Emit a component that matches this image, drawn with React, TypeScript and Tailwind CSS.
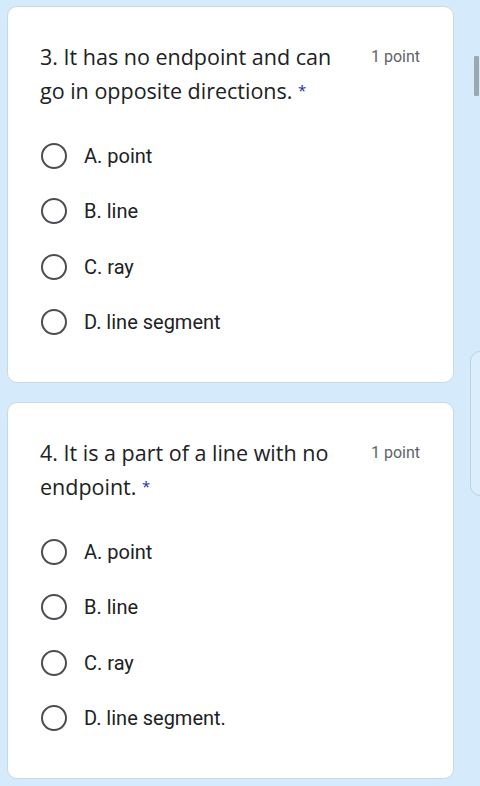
const questions = [
    {
        lines: ['3. It has no endpoint and can', 'go in opposite directions.'],
        options: ['A. point', 'B. line', 'C. ray', 'D. line segment'],
    },
    {
        lines: ['4. It is a part of a line with no', 'endpoint.'],
        options: ['A. point', 'B. line', 'C. ray', 'D. line segment.'],
    },
];

function Radio() {
    return <div className="w-[26px] h-[26px] rounded-full border-[2.5px] border-[#4a4d52] shrink-0 ml-[1px]" />;
}

function QuestionCard({ lines, options }: { lines: string[]; options: string[] }) {
    return (
        <div className="w-[447px] h-[377px] bg-white rounded-[10px] border border-[#c9d8e4] pl-[32px] pr-[33px] pt-[33px]">
            <div className="flex items-start justify-between">
                <h2 className="h-[68px] text-[21.5px] leading-[34px] text-[#202124] font-['Open_Sans',sans-serif] whitespace-nowrap">
                    {lines[0]}
                    <br />
                    {lines[1]} <span className="text-[#1f2aa6] text-[15px] leading-none relative -top-[3px]">*</span>
                </h2>
                <span className="text-[16px] leading-[34px] text-[#5f6368] font-['Roboto',sans-serif]">1 point</span>
            </div>
            <div className="flex flex-col mt-[20px]">
                {options.map((opt) => (
                    <div key={opt} className="h-[55.5px] flex items-center gap-[17px]">
                        <Radio />
                        <span className="text-[20px] text-[#202124] font-['Roboto',sans-serif]">{opt}</span>
                    </div>
                ))}
            </div>
        </div>
    );
}

export default function App() {
    return (
        <div className="relative w-[480px] h-[786px] bg-[#d5eafa] pl-[7px] pt-[6px] overflow-hidden flex flex-col gap-[19px]">
            {questions.map((q) => (
                <QuestionCard key={q.lines[0]} lines={q.lines} options={q.options} />
            ))}
            {/* scrollbar thumb */}
            <div className="absolute left-[474px] top-[56px] w-[5px] h-[40px] bg-[#9ba7b1] rounded-[1px]" />
            {/* side panel peeking in */}
            <div className="absolute left-[470px] top-[351px] w-[20px] h-[145px] bg-[#dcedfb] border border-[#bcd2e3] rounded-l-[10px]" />
        </div>
    );
}
